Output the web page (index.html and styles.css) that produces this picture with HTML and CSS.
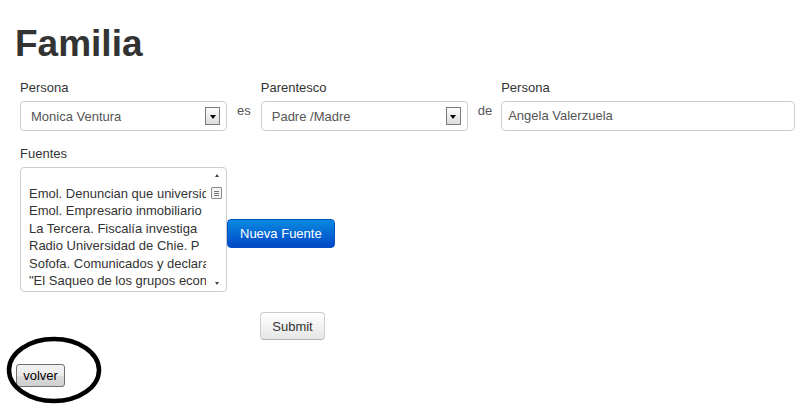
FILE: index.html
```html
<!DOCTYPE html>
<html>
<head>
<meta charset="utf-8">
<title>Familia</title>
<link rel="stylesheet" href="styles.css">
</head>
<body>
<div class="page">
  <h1 class="title">Familia</h1>
  <div class="row">
    <div class="field">
      <label class="lbl">Persona</label>
      <div class="select"><span class="val">Monica Ventura</span><span class="ddbtn"><i class="tri"></i></span></div>
    </div>
    <span class="conj">es</span>
    <div class="field">
      <label class="lbl">Parentesco</label>
      <div class="select"><span class="val">Padre /Madre</span><span class="ddbtn"><i class="tri"></i></span></div>
    </div>
    <span class="conj conj-de">de</span>
    <div class="field">
      <label class="lbl">Persona</label>
      <div class="input">Angela Valerzuela</div>
    </div>
  </div>
  <div class="fuentes">
    <label class="lbl">Fuentes</label>
    <div class="fuentes-row">
      <div class="listbox">
        <div class="opts">
          <div class="opt">Emol. Denuncian que universidad</div>
          <div class="opt">Emol. Empresario inmobiliario</div>
          <div class="opt">La Tercera. Fiscalía investiga</div>
          <div class="opt">Radio Universidad de Chie. P</div>
          <div class="opt">Sofofa. Comunicados y declaraciones</div>
          <div class="opt">"El Saqueo de los grupos económicos"</div>
        </div>
        <div class="sb">
          <i class="sb-up"></i>
          <span class="sb-thumb"><b></b><b></b><b></b></span>
          <i class="sb-down"></i>
        </div>
      </div>
      <button class="btn-primary">Nueva Fuente</button>
    </div>
  </div>
  <div class="actions">
    <button class="btn">Submit</button>
  </div>
  <div class="back">
    <button class="btn-native">volver</button>
  </div>
  <svg class="circle" width="104" height="72" viewBox="0 0 104 72">
    <ellipse cx="52" cy="36" rx="45" ry="31" fill="none" stroke="#000" stroke-width="4.5"/>
  </svg>
</div>
</body>
</html>
```

FILE: styles.css
```css
* { box-sizing: border-box; }
html, body { margin: 0; background: #fff; }
body {
  font-family: "Liberation Sans", Arial, sans-serif;
  font-size: 13px;
  color: #333;
}
.page {
  position: relative;
  padding: 24px 0 0 20px;
  height: 404px;
  overflow: hidden;
}
.title {
  margin: 0 0 0 -5px;
  font-size: 37px;
  line-height: 40px;
  font-weight: bold;
  color: #333;
}
.row {
  display: flex;
  align-items: flex-start;
  margin-top: 15px;
}
.field {
  display: flex;
  flex-direction: column;
}
.lbl {
  display: block;
  font-size: 13px;
  line-height: 18px;
  margin-bottom: 4px;
  color: #333;
}
.select {
  width: 207px;
  height: 30px;
  border: 1px solid #ccc;
  border-radius: 4px;
  display: flex;
  align-items: center;
  padding-left: 10px;
  color: #555;
  background: #fff;
}
.val { flex: 1; }
.ddbtn {
  width: 15px;
  height: 18px;
  margin-right: 6px;
  border: 1px solid #7a7a7a;
  background: linear-gradient(#fdfdfd, #dcdcdc);
  display: flex;
  align-items: center;
  justify-content: center;
}
.tri {
  width: 0;
  height: 0;
  border-left: 3.5px solid transparent;
  border-right: 3.5px solid transparent;
  border-top: 4px solid #000;
  margin-top: 2px;
}
.conj {
  margin: 23px 10px 0 10px;
  line-height: 18px;
  color: #555;
}
.conj-de { margin-right: 9px; }
.input {
  width: 294px;
  height: 30px;
  border: 1px solid #ccc;
  border-radius: 4px;
  padding: 0 6px;
  line-height: 28px;
  color: #555;
}
.fuentes { margin-top: 14px; }
.fuentes-row {
  display: flex;
  align-items: flex-start;
}
.listbox {
  width: 207px;
  height: 125px;
  border: 1px solid #ccc;
  border-radius: 4px;
  display: flex;
  overflow: hidden;
}
.opts {
  width: 185px;
  padding: 17px 0 0 8px;
  overflow: hidden;
  white-space: nowrap;
  line-height: 17.4px;
  color: #333;
}
.opt { overflow: hidden; }
.sb {
  flex: 1;
  display: flex;
  flex-direction: column;
  align-items: center;
  padding: 6px 0 6px 1px;
}
.sb-up, .sb-down {
  width: 0;
  height: 0;
  border-left: 2.5px solid transparent;
  border-right: 2.5px solid transparent;
}
.sb-up { border-bottom: 3px solid #444; }
.sb-down { border-top: 3px solid #444; margin-top: auto; }
.sb-thumb {
  margin-top: 10px;
  width: 11px;
  height: 12px;
  border: 1px solid #8a8a8a;
  border-radius: 1px;
  background: #f4f4f4;
  display: flex;
  flex-direction: column;
  justify-content: center;
  align-items: center;
  gap: 1px;
}
.sb-thumb b {
  display: block;
  width: 5px;
  height: 1px;
  background: #777;
}
.btn-primary {
  margin-top: 52px;
  height: 29px;
  padding: 0 12px;
  border: 1px solid #0050c0;
  border-radius: 4px;
  background: linear-gradient(#0a8ae0, #0048c8);
  color: #fff;
  font-family: "Liberation Sans", Arial, sans-serif;
  font-size: 13px;
  line-height: 27px;
}
.actions {
  margin-top: 20px;
  padding-left: 240px;
}
.btn {
  width: 65px;
  height: 28px;
  border: 1px solid #ccc;
  border-bottom-color: #b3b3b3;
  border-radius: 4px;
  background: linear-gradient(#ffffff, #e6e6e6);
  color: #333;
  font-family: "Liberation Sans", Arial, sans-serif;
  font-size: 13px;
  padding: 0;
}
.back {
  margin-top: 24px;
  margin-left: -4px;
}
.btn-native {
  width: 49px;
  height: 23px;
  border: 1px solid #707070;
  border-radius: 3px;
  background: linear-gradient(#f2f2f2 0%, #ebebeb 50%, #dddddd 51%, #cfcfcf 100%);
  color: #000;
  font-family: "Liberation Sans", Arial, sans-serif;
  font-size: 13px;
  padding: 0;
}
.circle {
  position: absolute;
  left: 2px;
  top: 334px;
}
```
